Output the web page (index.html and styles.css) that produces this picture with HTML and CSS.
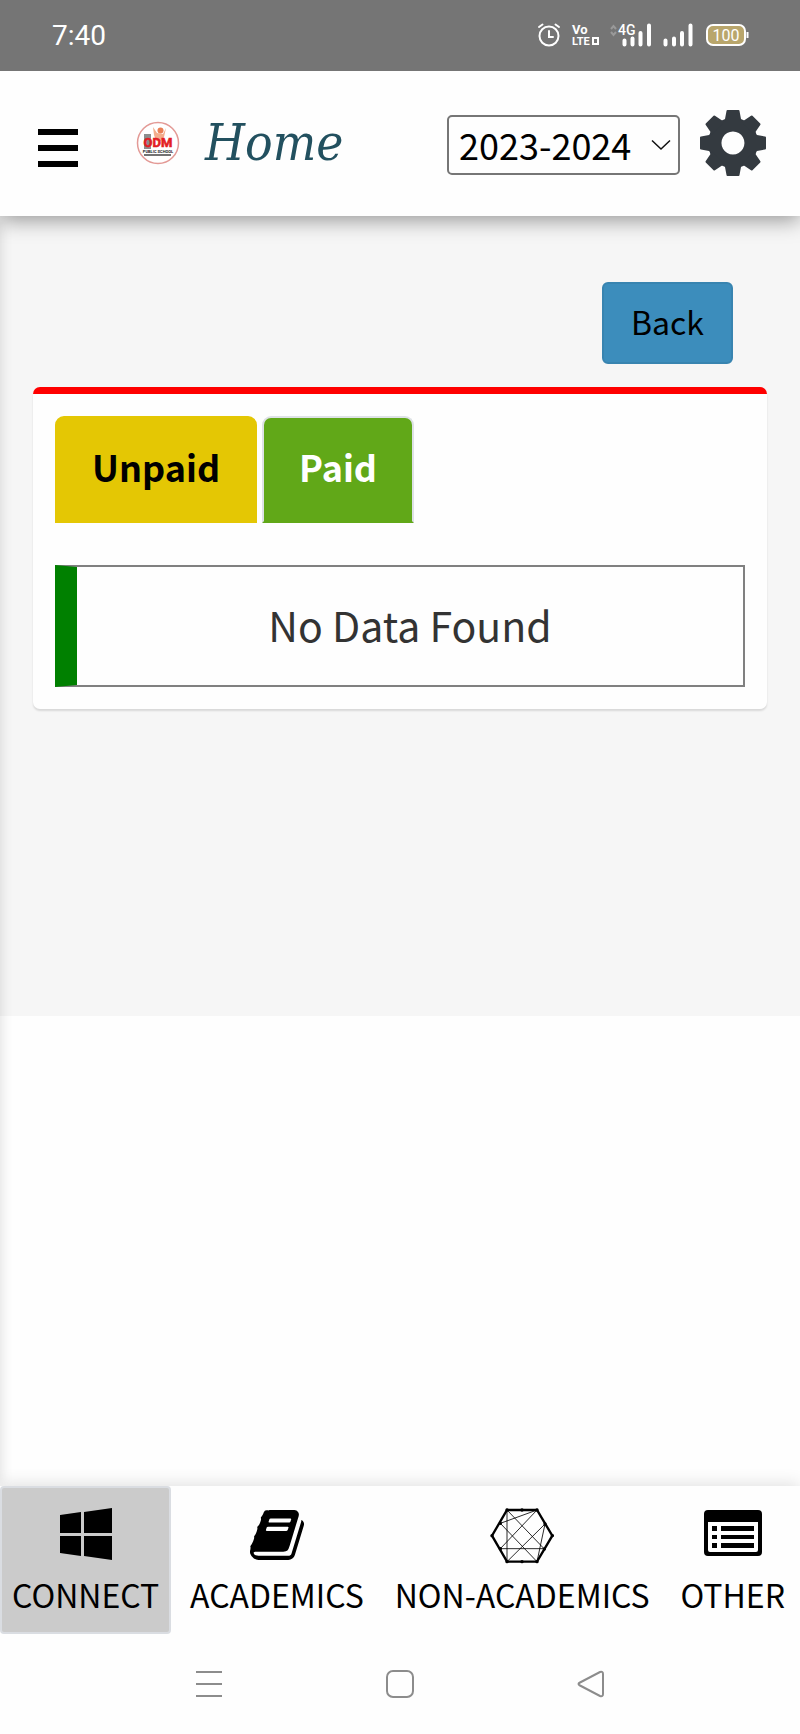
FILE: index.html
```html
<!DOCTYPE html>
<html lang="en">
<head>
<meta charset="utf-8">
<meta name="viewport" content="width=device-width, initial-scale=1">
<title>Home</title>
<link rel="stylesheet" href="styles.css">
</head>
<body>
<div class="status">
  <span class="clock">7:40</span>
  <svg class="status-icons" width="212" height="26" viewBox="0 0 212 26" aria-hidden="true">
    <g fill="none" stroke="#fff" stroke-width="2" stroke-linecap="round">
      <circle cx="11" cy="13" r="9.500"/>
      <path d="M11 8v6h4M1 4l3.500-2.500M21 4l-3.500-2.500"/>
    </g>
    <g fill="#fff" font-weight="700" font-family="Roboto, sans-serif">
      <text x="34" y="11" font-size="13">Vo</text>
      <text x="34" y="22" font-size="11">LTE</text>
      <text x="80" y="12" font-size="14" font-weight="500">4G</text>
    </g>
    <path d="M54 14h7v8h-7zM56 16v4h3v-4z" fill="#fff" fill-rule="evenodd"/>
    <path d="M73 6l2.500-3 2.500 3M73 9l2.500 3 2.500-3" fill="none" stroke="#999" stroke-width="2"/>
    <path d="M86.500 17.500v4M94.500 15.500v6M102.500 10v11.500M111 2.500v19M127.500 17.500v4M136 15.500v6M144 10v11.500M152.500 2.500v19" stroke="#fff" stroke-width="4" stroke-linecap="round"/>
    <rect x="169" y="2" width="38" height="20" rx="6" fill="#b9a66c" stroke="#fff" stroke-width="2"/>
    <path d="M209.500 9v6" stroke="#fff" stroke-width="2"/>
    <text x="188" y="18" font-size="16" fill="#fff" text-anchor="middle" font-family="Roboto, sans-serif">100</text>
  </svg>
</div>

<header class="header">
  <button class="burger" type="button" aria-label="Menu"><span></span><span></span><span></span></button>
  <svg class="logo" width="44" height="44" viewBox="0 0 44 44" role="img" aria-label="ODM Public School">
    <circle cx="22" cy="22" r="20.500" fill="#fff" stroke="#e39a96" stroke-width="1.500"/>
    <path d="M8 13h7v15H8z" fill="#8d8d8d"/>
    <path d="M17 6l4 6 6 1 3-6-2 9-3 4h-5l-2-6z" fill="#f3ad8c"/>
    <circle cx="24.500" cy="9.500" r="3" fill="#ea7f55"/>
    <text x="22" y="26" text-anchor="middle" font-family="Roboto, sans-serif" font-size="13" font-weight="700" fill="#e31e24" stroke="#e31e24" stroke-width=".6">ODM</text>
    <text x="22" y="32" text-anchor="middle" font-family="Roboto, sans-serif" font-size="4" font-weight="700" fill="#222">PUBLIC SCHOOL</text>
    <path d="M8 34h27" stroke="#444" stroke-width="1.500"/>
  </svg>
  <h1 class="title">Home</h1>
  <div class="year">
    <select aria-label="Academic year"><option>2023-2024</option></select>
    <svg class="chevron" width="20" height="12" viewBox="0 0 20 12" aria-hidden="true"><path d="M1 1.500l9 8.500 9-8.500" fill="none" stroke="#111" stroke-width="1.500"/></svg>
  </div>
  <button class="gear" type="button" aria-label="Settings">
    <svg width="66" height="66" viewBox="-33 -33 66 66" fill="#343a40" aria-hidden="true">
      <path d="M0-25a25 25 0 1 0 .1 0zM0-11.500a11.500 11.500 0 1 1-.1 0z" fill-rule="evenodd"/>
      <path id="tooth" d="M-5.500-33h11q1 0 1 1l1.500 8q.5 2 3 3h-22q2.500-1 3-3l1.500-8q0-1 1-1z"/>
      <use href="#tooth" transform="rotate(45)"/><use href="#tooth" transform="rotate(90)"/><use href="#tooth" transform="rotate(135)"/><use href="#tooth" transform="rotate(180)"/><use href="#tooth" transform="rotate(225)"/><use href="#tooth" transform="rotate(270)"/><use href="#tooth" transform="rotate(315)"/>
    </svg>
  </button>
</header>

<div class="page">
  <main class="content">
    <div class="actions"><button class="back" type="button">Back</button></div>
    <section class="card">
      <div class="tabs" role="tablist">
        <button class="tab unpaid" type="button" role="tab" aria-selected="true">Unpaid</button>
        <button class="tab paid" type="button" role="tab" aria-selected="false">Paid</button>
      </div>
      <p class="notice">No Data Found</p>
    </section>
  </main>
</div>

<nav class="bottom">
  <a class="item active" href="#connect">
    <svg width="52" height="52" viewBox="0 0 52 52" aria-hidden="true"><path d="M0 7l21-3v21H0zM24 4l28-4v25H24zM0 28h21v20L0 45zM24 28h28v24l-28-4z"/></svg>
    <span>CONNECT</span>
  </a>
  <a class="item" href="#academics">
    <svg width="54" height="52" viewBox="0 64 1664 1600" aria-hidden="true"><path d="M1639 478q40 57 18 129l-275 906q-19 64-76.500 107.500t-122.500 43.500h-923q-77 0-148.500-53.500t-99.500-131.500q-24-67-2-127 0-4 3-27t4-37q1-8-3-21.500t-3-19.500q2-11 8-21t16.500-23.500 16.500-23.500q23-38 45-91.500t30-91.500q3-10 .5-30t-.5-28q3-11 17-28t17-23q21-36 42-92t25-90q1-9-2.500-32t.5-28q4-13 22-30.500t22-22.500q19-26 42.500-84.500t27.500-96.500q1-8-3-25.500t-2-26.500q2-8 9-18t18-23 17-21q8-12 16.500-30.500t15-35 16-36 19.500-32 26.500-23.500 36-11.500 47.500 5.500l-1 3q38-9 51-9h761q74 0 114 56t18 130l-274 906q-36 119-71.500 153.500t-128.500 34.500h-869q-27 0-38 15-11 16-1 43 24 70 144 70h923q29 0 56-15.500t35-41.500l300-987q7-22 5-57 38 15 59 43zm-1064 2q-4 13 2 22.500t20 9.500h608q13 0 25.500-9.500t16.500-22.500l21-64q4-13-2-22.500t-20-9.500h-608q-13 0-25.500 9.500t-16.500 22.500zm-83 256q-4 13 2 22.500t20 9.500h608q13 0 25.500-9.500t16.500-22.500l21-64q4-13-2-22.500t-20-9.500h-608q-13 0-25.500 9.500t-16.500 22.500z"/></svg>
    <span>ACADEMICS</span>
  </a>
  <a class="item" href="#non-academics">
    <svg width="64" height="56" viewBox="61 48 192 168" fill="none" stroke="#000" aria-hidden="true">
      <path d="M112 54h90l46 77-46 78h-90l-45-78z" stroke-width="7"/>
      <path d="M112 54v155M112 54l112 117M202 54L92 94M202 54L92 170M92 94l110 115M226 96L112 209M226 96l-24 113M92 170h132" stroke-width="2.500"/>
      <path d="M112 54h.1M202 54h.1M248 131h.1M202 209h.1M112 209h.1M67 131h.1M92 94h.1M226 96h.1M92 170h.1M224 171h.1M157 54h.1M157 209h.1" stroke-width="10" stroke-linecap="round"/>
    </svg>
    <span>NON-ACADEMICS</span>
  </a>
  <a class="item" href="#other">
    <svg width="60" height="52" viewBox="0 0 60 52" aria-hidden="true">
      <path d="M5 2h50q4 0 4 4v38q0 4-4 4H5q-4 0-4-4V6q0-4 4-4zM5 14v28q0 2 2 2h46q2 0 2-2V14z" fill-rule="evenodd"/>
      <path d="M9 18h5v5H9zM9 27h5v4H9zM9 35h5v5H9zM18 18h33v5H18zM18 27h33v4H18zM18 35h33v5H18z"/>
    </svg>
    <span>OTHER</span>
  </a>
</nav>

<div class="system">
  <button type="button" aria-label="Recent apps"><svg width="28" height="28" viewBox="0 0 28 28"><path d="M1 2h26M1 14h26M1 26h26"/></svg></button>
  <button type="button" aria-label="Home screen"><svg width="28" height="28" viewBox="0 0 28 28"><rect x="1" y="1" width="26" height="26" rx="6"/></svg></button>
  <button type="button" aria-label="Go back"><svg width="28" height="28" viewBox="0 0 28 28"><path d="M3 12.500L23 2q3-1 3 2v20q0 3-3 2L3 15.500q-3-1.500 0-3z"/></svg></button>
</div>
</body>
</html>
```

FILE: styles.css
```css
* { box-sizing: border-box; }

body {
  margin: 0;
  min-height: 100vh;
  display: flex;
  flex-direction: column;
  background: #fefefe;
  color: #000;
  font-family: "Noto Sans CJK SC", "Noto Sans", sans-serif;
  font-size: 32px;
}

button, select {
  margin: 0;
  padding: 0;
  border: 0;
  background: none;
  color: inherit;
  font: inherit;
}

svg { display: block; flex: none; }

.status {
  display: flex;
  align-items: center;
  justify-content: space-between;
  height: 71px;
  padding: 0 50px 0 52px;
  background: #757575;
  color: #fff;
}

.status-icons { overflow: visible; }

.clock {
  font-family: Roboto, sans-serif;
  font-size: 28px;
  line-height: 32px;
}

.header {
  position: relative;
  display: flex;
  align-items: center;
  height: 145px;
  padding: 0 34px 2px 38px;
  background: #fefefe;
  box-shadow: 0 4px 20px rgba(0, 0, 0, .4);
  clip-path: inset(0 0 -40px 0);
  z-index: 1;
}

.burger {
  display: grid;
  gap: 10px;
  width: 40px;
  padding-top: 10px;
}

.burger span { height: 6px; background: #000; }

.logo { margin-left: 58px; }

.title {
  margin: 0 auto 0 25px;
  color: #22505f;
  font: italic 400 51px/60px "DejaVu Serif Condensed", "DejaVu Serif", serif;
}

.year {
  position: relative;
  padding-top: 4px;
}

.year select {
  display: block;
  width: 233px;
  height: 60px;
  padding: 0 10px 2px;
  appearance: none;
  border: 2px solid #767676;
  border-radius: 5px;
  font-size: 36px;
  line-height: 54px;
}

.chevron {
  position: absolute;
  top: 28px;
  right: 9px;
  pointer-events: none;
}

.gear { margin-left: 20px; }

.page {
  position: relative;
  flex: 1;
  overflow: hidden;
}

/* Edge shadow of the closed side drawer */
.page::before {
  content: "";
  position: absolute;
  inset: 0 100% 0 -20px;
  box-shadow: 0 0 14px rgba(0, 0, 0, .14);
}

.content {
  min-height: 800px;
  padding: 66px 33px 0;
  background: #f6f6f6;
}

.actions {
  display: flex;
  justify-content: flex-end;
  padding: 0 34px 22px 0;
}

.back {
  height: 82px;
  margin-bottom: 1px;
  padding: 0 27px 5px;
  border: 2px solid #3884b0;
  border-radius: 6px;
  background: #3c8dbc;
}

.card {
  padding: 22px;
  border-top: 7px solid #f00;
  border-radius: 7px;
  background: #fefefe;
  box-shadow: 0 2px 2px rgba(0, 0, 0, .12);
}

.tabs { display: flex; gap: 5px; }

.tab {
  height: 107px;
  padding: 0 35px 7px;
  border: 2px solid #dee2e6;
  border-radius: 9px 9px 0 0;
  font-size: 36px;
  font-weight: 700;
}

.unpaid { border-color: #e4c704; background: #e4c704; }

.paid {
  border-bottom-color: #61a818;
  background: #61a818;
  color: #fff;
}

.notice {
  margin: 42px 0 0;
  padding: 27px 0 31px;
  border: 2px solid #808080;
  border-left: 22px solid #008000;
  color: #333;
  font-size: 41px;
  line-height: 60px;
  text-align: center;
}

.bottom {
  position: relative;
  display: flex;
  justify-content: space-between;
  padding-right: 3px;
  background: #fefefe;
  box-shadow: 0 -2px 16px rgba(0, 0, 0, .12);
  clip-path: inset(-30px 0 0 0);
}

.item {
  display: flex;
  flex-direction: column;
  align-items: center;
  justify-content: space-between;
  height: 148px;
  padding: 20px 10px 16px;
  border: 2px solid transparent;
  border-radius: 4px;
  color: #000;
  line-height: 44px;
  text-decoration: none;
}

.active { border-color: #dadde2; background: #cbcbcb; }

.system {
  display: flex;
  justify-content: center;
  align-items: center;
  gap: 163px;
  height: 100px;
  background: #fefefe;
}

.system svg { fill: none; stroke: #8c8c8c; stroke-width: 2; }
```
